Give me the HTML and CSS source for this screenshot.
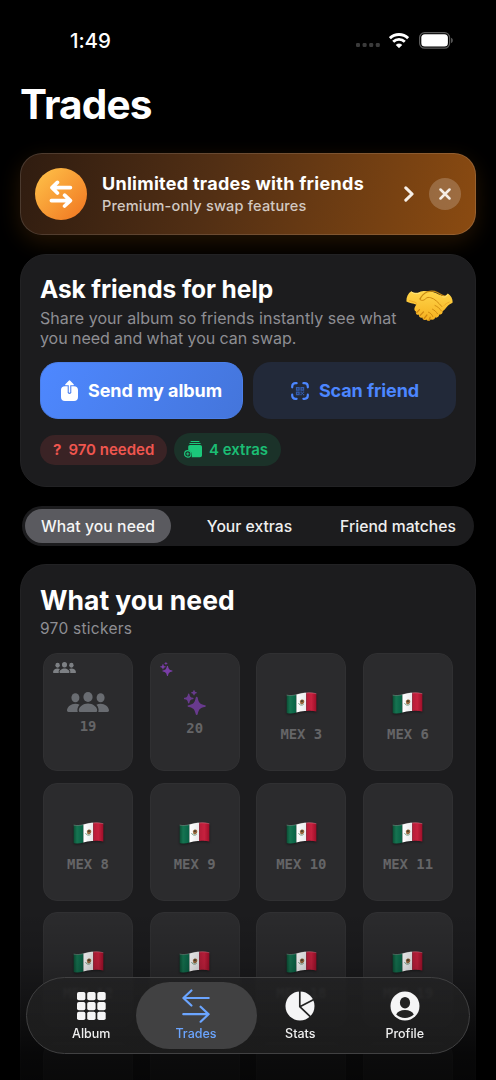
FILE: index.html
```html
<!DOCTYPE html>
<html lang="en">
<head>
<meta charset="utf-8">
<title>Trades</title>
<link rel="stylesheet" href="styles.css">
</head>
<body>
<svg class="defs" aria-hidden="true">
  <defs>
    <linearGradient id="green" x1="0" x2="1"><stop offset="0" stop-color="#0b4f35"/><stop offset=".35" stop-color="#167451"/><stop offset="1" stop-color="#076044"/></linearGradient>
    <linearGradient id="white" x1="0" x2="1"><stop offset="0" stop-color="#fff"/><stop offset="1" stop-color="#e9e9eb"/></linearGradient>
    <linearGradient id="red" x1="0" x2="1"><stop offset="0" stop-color="#b61c38"/><stop offset=".5" stop-color="#c7213e"/><stop offset="1" stop-color="#9e0e29"/></linearGradient>
    <linearGradient id="skin" x1="0" y1="0" x2="0" y2="1"><stop offset="0" stop-color="#ffd54a"/><stop offset="1" stop-color="#f6b01e"/></linearGradient>
  </defs>
  <symbol id="flag" viewBox="0 0 32 24">
    <path d="M.5 3C4 4.100 7 3.700 10.700 2.700V21.400C7 22.500 4 22.700 .5 21.800Z" fill="url(#green)"/>
    <path d="M10.700 2.700 14 1.800C17 1 19 .8 21 .8V19.800C17 19.500 14 20.500 10.700 21.400Z" fill="url(#white)"/>
    <path d="M21 .8C25 .4 28 .7 31.500 1.600V20.300C28 19.400 25 19.200 21 19.800Z" fill="url(#red)"/>
    <path d="M14.200 9.500c1-2 3.500-2.300 4.400-.8s-.1 3.800-2.100 4.300c-1.200.2-2-.6-1.800-1.500" fill="#95663b"/>
    <path d="M13 11.500c.4 2.300 3.800 3.200 5.400 1.100" fill="none" stroke="#719b82" stroke-width="1"/>
    <circle cx="16.500" cy="9.500" r="1" fill="#34352b"/>
    <path d="M.5 3.200C8 5 13 1 21 1c4-.4 7-.1 10.500.8" fill="none" stroke="#fff" stroke-opacity=".35" stroke-width=".7"/>
  </symbol>
  <symbol id="people" viewBox="0 0 42 20">
    <ellipse cx="8.400" cy="5.800" rx="4" ry="4.500"/><ellipse cx="33.600" cy="5.800" rx="4" ry="4.500"/><ellipse cx="21" cy="5" rx="4.600" ry="5"/>
    <path d="M21 11.600c-5 0-9.200 3.400-9.200 6.800 0 1.100.7 1.600 1.700 1.600h15c1 0 1.700-.5 1.700-1.600 0-3.400-4.200-6.800-9.200-6.800ZM12.600 12.800c-1.200-.7-2.700-1-4.200-1C4 11.800 0 15 0 18.600 0 19.500.6 20 1.500 20h9.200c-.8-2.500 0-5.200 1.900-7.200ZM29.400 12.800c1.200-.7 2.700-1 4.200-1 4.400 0 8.400 3.200 8.400 6.800 0 .9-.6 1.400-1.500 1.400h-9.200c.8-2.500 0-5.200-1.900-7.200Z"/>
  </symbol>
  <symbol id="sparkles" viewBox="0 0 22 25">
    <path d="M12.700 6.800c.6 0 .8.400 1 1 1 5 2.200 6.600 7.200 7.400.7.100 1 .4 1 .9s-.3.800-1 .9c-5 .9-6.200 2.400-7.200 7.100-.1.600-.4.900-1 .9s-.9-.3-1-.9c-1-4.700-2.200-6.200-7.200-7.100-.7-.1-1-.4-1-.9s.3-.8 1-.9c5-.8 6.200-2.400 7.200-7.400.1-.6.400-1 1-1Z"/>
    <path d="M4.700 3.600c.4 0 .6.300.7.700.5 2.500 1 3.100 3.500 3.500.4.100.7.300.7.700s-.3.600-.7.700c-2.500.4-3 1-3.500 3.500-.1.400-.3.700-.7.700s-.6-.3-.7-.7c-.5-2.500-1-3.100-3.500-3.500-.4-.1-.7-.3-.7-.7s.3-.6.700-.7c2.500-.4 3-1 3.500-3.500.1-.4.300-.7.700-.7ZM10 0c.3 0 .4.200.5.500.3 1.200.7 1.500 1.900 1.700.4.100.6.200.6.500s-.2.400-.6.500c-1.200.2-1.600.5-1.900 1.700-.1.300-.2.500-.5.500s-.4-.2-.5-.5c-.3-1.200-.7-1.500-1.900-1.700-.4-.1-.6-.2-.6-.5s.2-.4.600-.5c1.200-.2 1.600-.5 1.900-1.700.1-.3.200-.5.500-.5Z"/>
  </symbol>
</svg>

<header class="status">
  <span class="time">1:49</span>
  <span class="status-icons">
    <svg class="dots" viewBox="0 0 24 4"><rect width="4" height="4" rx="1.200"/><rect x="6.600" width="4" height="4" rx="1.200"/><rect x="13.200" width="4" height="4" rx="1.200"/><rect x="19.800" width="4" height="4" rx="1.200"/></svg>
    <svg class="wifi" viewBox="0 0 20 15"><g fill="none" stroke="#fff" stroke-width="2.900"><path d="M.9 5.200C6 .3 14 .3 19.100 5.200"/><path d="M4.200 8.700C7.500 5.600 12.500 5.600 15.800 8.700"/></g><path d="M10 15 6.900 11.900C8.700 10.200 11.300 10.200 13.100 11.900Z" fill="#fff" stroke="#fff" stroke-width=".3"/></svg>
    <svg class="battery" viewBox="0 0 34 17"><rect x=".6" y=".6" width="30" height="15.600" rx="5" fill="none" stroke="#5c5c5c" stroke-width="1.200"/><rect x="2.300" y="2.300" width="26.600" height="12.200" rx="3.500" fill="#fff"/><path d="M32.200 5.800c2 1 2 4.200 0 5.200Z" fill="#6a6a6a"/></svg>
  </span>
</header>

<main class="page">
  <h1 class="title">Trades</h1>

  <section class="promo">
    <span class="promo-icon"><svg viewBox="0 0 24 28" fill="none" stroke="#fff" stroke-width="3.700" stroke-linecap="round" stroke-linejoin="round"><path d="M21.400 7.600H3M8.400 2.400 3 7.600 8.400 13M2.400 20.600H21M15.600 15.200 21.400 20.600 15.600 26"/></svg></span>
    <div class="promo-text">
      <h2 class="promo-title">Unlimited trades with friends</h2>
      <p class="promo-sub">Premium-only swap features</p>
    </div>
    <svg class="chevron" viewBox="0 0 10 16" fill="none" stroke="#f6efe8" stroke-width="3" stroke-linecap="round" stroke-linejoin="round"><path d="M1.800 1.900 8.100 8 1.800 14.100"/></svg>
    <span class="close"><svg viewBox="0 0 12 12" fill="none" stroke="#f5eee7" stroke-width="2.500" stroke-linecap="round"><path d="M1.500 1.500 10.500 10.500M10.500 1.500 1.500 10.500"/></svg></span>
  </section>

  <section class="card help">
    <div class="help-head">
      <div>
        <h2 class="help-title">Ask friends for help</h2>
        <p class="help-sub"><span class="line1">Share your album so friends instantly see what</span><br><span class="line2">you need and what you can swap.</span></p>
      </div>
      <svg class="shake" viewBox="0 0 47 32">
        <path d="M.4 11.500C.2 7 2 3.200 5.300 1.200 7.500 3 10.800 3.100 13.200 2.200c2-.8 4-1.100 5.700-1.100l8 .9c4 1.200 8.700 4.200 11.600 4 1.300-.2 2.400-1.200 3.300-2.400 3.200 1.900 4.900 5.300 4.900 9-1.800 1.400-4 2.200-5.500 3.900-1.500 1.800-2.500 3.500-4.500 4.600.2 2.600-1.700 3.900-3.500 3.500-.2 2.400-2 3.500-4 2.900-.7 2.200-2.800 2.800-4.400 1.700-1 2.200-3.500 2-4.500.3-1.900 1.300-4 .1-3.900-2-2 .7-3.900-.6-3.500-2.700-2.200.3-3.700-1.500-2.900-3.400-2.700-.9-1.500-4.800.4-6.600C6.800 13.200 3.500 13.200.4 11.500Z" fill="url(#skin)"/>
        <path d="M14 9.500c1.300-3.900 4.300-6.300 8-7.900 3.200-.8 6.700-.5 9.400.9 2.400 1.200 5 3.500 7.400 3.400" fill="none" stroke="#c98a13" stroke-width="1.100"/>
        <path d="M13.700 9c.7 2 4 1.900 6-.3 1.500-1.500 3-1.500 5-1 4 1.100 7.500 4.700 11.100 8.800M29 15.500c2.700 1.200 4.800 3.100 6.400 5.400M26.500 19.200c2 1 3.700 2.500 5 4.600M22.500 22.200c2 .7 3.600 2.300 4.300 4.300" fill="none" stroke="#d08b10" stroke-width="1" stroke-linecap="round"/>
        <path d="m10.700 22.700 2.800-3M14.200 25.400l3.300-3.500M18.200 28.300l2.700-3.300M23 30.200l1.200-3" fill="none" stroke="#ce8511" stroke-width="1.200" stroke-linecap="round"/>
        <path d="M5.700 2.300c2.500 1.700 5.400 1.800 8 .8M41.700 4.800c-1.400 2.300-3.300 2.600-5 2" fill="none" stroke="#ffe77c" stroke-linecap="round"/>
        <path d="M3 10.500c3 1 6 1 7.800 3M43.600 12c-2.400.8-4.500 2.200-5.800 3.800" fill="none" stroke="#e29a17" stroke-opacity=".6"/>
      </svg>
    </div>
    <div class="actions">
      <button class="btn primary">
        <svg class="ic-send" viewBox="0 0 17 21"><path d="M4 6.200h4.500H13c2.600 0 4 1.400 4 3.900V17c0 2.600-1.400 4-4 4H4c-2.600 0-4-1.400-4-4v-6.900c0-2.500 1.400-3.900 4-3.900Z" fill="#fff"/><path d="M8.500 12.200V6" stroke="#4a7fee" stroke-width="3.600" stroke-linecap="round"/><path d="M8.500 12V2" fill="none" stroke="#fff" stroke-width="1.500" stroke-linecap="round"/><path d="M4.800 4.700 8.500 1l3.700 3.700Z" fill="#fff" stroke="#fff" stroke-width="1.300" stroke-linejoin="round"/></svg>
        <span class="send-label">Send my album</span>
      </button>
      <button class="btn secondary">
        <svg class="ic-scan" viewBox="0 0 18 18" fill="none" stroke="#4c86ff" stroke-linecap="round"><path stroke-width="2.200" d="M1.200 5.300V4.400C1.200 2.400 2.400 1.200 4.400 1.200H5.600M12.400 1.200h1.200c2 0 3.200 1.200 3.200 3.200v.9M16.800 12.700v.9c0 2-1.200 3.200-3.200 3.200h-1.200M5.600 16.800H4.400c-2 0-3.200-1.200-3.200-3.200v-.9"/><path stroke="none" fill="#335cad" d="M4.900 4.900h3.800v3.800H4.900ZM9.400 4.900h3.800v3.800H9.400ZM4.900 9.400h3.800v3.800H4.900ZM9.400 9.400h1.400v1.400H9.400ZM11.800 9.400h1.400v1.400h-1.400ZM10.700 10.700h1.300V12h-1.300ZM9.400 11.800h1.300v1.400H9.400ZM11.900 11.900h1.300v1.300h-1.300Z"/><path stroke="none" fill="#223052" d="M6.200 6.300h1.200v1.100H6.200ZM10.700 6.300h1.200v1.100h-1.200ZM6.200 10.800h1.200v1.100H6.200Z"/></svg>
        <span class="scan-label">Scan friend</span>
      </button>
    </div>
    <div class="pills">
      <span class="pill needed"><span class="q">?</span><span class="needed-label">970 needed</span></span>
      <span class="pill extras">
        <svg class="ic-stack" viewBox="0 0 18 17" fill="#1bc87a"><rect x="6.500" width="9" height="1.100" rx=".55"/><rect x="5.300" y="1.900" width="11.400" height="1.200" rx=".6"/><path d="M6.200 4H16c1.300 0 2 .7 2 2v8.300c0 1.300-.7 2-2 2H7.600c1-2.400.5-5.800-3.400-7.500V6c0-1.300.7-2 2-2Z"/><circle cx="3.800" cy="12.900" r="3.200" fill="none" stroke="#1bc87a" stroke-width="1.200"/><path d="M3.800 11.300v3.200M2.200 12.900h3.200" stroke="#1bc87a" stroke-width="1"/></svg>
        <span class="extras-label">4 extras</span>
      </span>
    </div>
  </section>

  <nav class="segments">
    <span class="segment selected">What you need</span>
    <span class="segment">Your extras</span>
    <span class="segment">Friend matches</span>
  </nav>

  <section class="card list">
    <h2 class="list-title">What you need</h2>
    <p class="list-sub">970 stickers</p>
    <div class="grid">
      <article class="sticker team"><svg class="corner"><use href="#people"/></svg><svg class="art"><use href="#people"/></svg><span>19</span></article>
      <article class="sticker shiny"><svg class="corner"><use href="#sparkles"/></svg><svg class="art"><use href="#sparkles"/></svg><span>20</span></article>
      <article class="sticker"><svg class="flag"><use href="#flag"/></svg><span>MEX 3</span></article>
      <article class="sticker"><svg class="flag"><use href="#flag"/></svg><span>MEX 6</span></article>
      <article class="sticker"><svg class="flag"><use href="#flag"/></svg><span>MEX 8</span></article>
      <article class="sticker"><svg class="flag"><use href="#flag"/></svg><span>MEX 9</span></article>
      <article class="sticker"><svg class="flag"><use href="#flag"/></svg><span>MEX 10</span></article>
      <article class="sticker"><svg class="flag"><use href="#flag"/></svg><span>MEX 11</span></article>
      <article class="sticker"><svg class="flag"><use href="#flag"/></svg><span>MEX 12</span></article>
      <article class="sticker"><svg class="flag"><use href="#flag"/></svg><span>MEX 14</span></article>
      <article class="sticker"><svg class="flag"><use href="#flag"/></svg><span>MEX 18</span></article>
      <article class="sticker"><svg class="flag"><use href="#flag"/></svg><span>MEX 19</span></article>
    </div>
    <div class="grid next-row">
      <article class="sticker"></article>
      <article class="sticker"></article>
      <article class="sticker"></article>
      <article class="sticker"></article>
    </div>
  </section>
</main>

<div class="fade"></div>
<nav class="tabs">
  <a class="tab"><svg class="tab-icon" viewBox="0 0 30 30" fill="#f5f5f6"><rect x="1" y="1" width="8.400" height="8.200" rx="1.800"/><rect x="11.200" y="1" width="8.400" height="8.200" rx="1.800"/><rect x="21.300" y="1" width="8.400" height="8.200" rx="1.800"/><rect x="1" y="11" width="8.400" height="8.200" rx="1.800"/><rect x="11.200" y="11" width="8.400" height="8.200" rx="1.800"/><rect x="21.300" y="11" width="8.400" height="8.200" rx="1.800"/><rect x="1" y="20.800" width="8.400" height="8.200" rx="1.800"/><rect x="11.200" y="20.800" width="8.400" height="8.200" rx="1.800"/><rect x="21.300" y="20.800" width="8.400" height="8.200" rx="1.800"/></svg><span>Album</span></a>
  <a class="tab active"><svg class="tab-icon swap" viewBox="0 0 28 34" fill="none" stroke="#6ba5ff" stroke-width="2.200" stroke-linecap="round" stroke-linejoin="round"><path d="M26.700 9H1.400M9.400 1.500 1.400 9l8 7.500M1.300 25.200h25.300M18.600 17.700l8 7.500-8 7.500"/></svg><span>Trades</span></a>
  <a class="tab"><svg class="tab-icon" viewBox="0 0 30 30"><circle cx="15" cy="15" r="14.500" fill="#f5f5f6"/><path d="M14.800 0V15.700L25.800 26.200M14.800 15.700 28.800 8.500" fill="none" stroke="#232323" stroke-width="1.700"/></svg><span>Stats</span></a>
  <a class="tab"><svg class="tab-icon" viewBox="0 0 30 30"><circle cx="15" cy="15" r="14.500" fill="#f5f5f6"/><ellipse cx="15" cy="11.700" rx="5.100" ry="5.800" fill="#222"/><path d="M6.200 23.500c1.300-3 4.500-4.600 8.800-4.600s7.500 1.600 8.800 4.600c-2.300 2.300-5.400 3.500-8.800 3.500s-6.500-1.200-8.800-3.500Z" fill="#222"/></svg><span>Profile</span></a>
</nav>
</body>
</html>
```
FILE: styles.css
```css
* { box-sizing: border-box; }
html { background: #000; }
body {
  margin: 0;
  width: 496px;
  height: 1080px;
  overflow: hidden;
  position: relative;
  background: #000;
  color: #fff;
  font-family: Inter, "Liberation Sans", sans-serif;
}
h1, h2, p { margin: 0; }
svg { display: block; flex: none; }
h1, h2, p, span { white-space: nowrap; }
.defs { position: absolute; width: 0; height: 0; }

.status { display: flex; justify-content: space-between; align-items: center; height: 80px; padding: 0 43px 0 70px; }
.time { font-size: 20.500px; font-weight: 550; letter-spacing: -.1px; }
.status-icons { display: flex; align-items: center; }
.dots { width: 24px; height: 4px; fill: #3b3b3b; margin: 10px 9px 0 0; }
.wifi { width: 20px; height: 15px; margin-right: 10px; }
.battery { width: 34px; height: 17px; }

.page { padding: 0 20px; }
.title { height: 73px; font-size: 40.500px; line-height: 50px; font-weight: 700; letter-spacing: -.8px; }

.promo {
  display: flex; align-items: center;
  height: 82px; padding: 0 14px;
  border: 1px solid rgba(255,255,255,.13); border-radius: 22px;
  background: linear-gradient(105deg, #2f1c10 0%, #522f14 42%, #8b4b11 100%) border-box;
  box-shadow: 0 7px 22px rgba(255,145,20,.14);
}
.promo-icon { display: grid; place-items: center; width: 52px; height: 52px; border-radius: 50%; background: linear-gradient(135deg, #ffc44a, #f07420); }
.promo-icon svg { width: 24px; height: 28px; }
.promo-text { flex: 1; margin-left: 15px; }
.promo-title { font-size: 18px; line-height: 22px; font-weight: 750; letter-spacing: .28px; padding-top: 1px; }
.promo-sub { font-size: 14.500px; line-height: 21px; font-weight: 450; letter-spacing: .19px; color: #d2c9c2; }
.chevron { width: 10px; height: 16px; margin-right: 15px; }
.close { display: grid; place-items: center; width: 32px; height: 32px; border-radius: 50%; background: rgba(255,255,255,.2); }
.close svg { width: 12px; height: 12px; }

.card { background: #1c1c1e; border: 1px solid #222224; border-radius: 26px; }
.help { height: 233px; margin-top: 19px; padding: 18px 19px; }
.help-head { display: flex; justify-content: space-between; height: 89px; }
.help-title { font-size: 24.500px; line-height: 32px; font-weight: 750; letter-spacing: -.1px; }
.help-sub { margin-top: 4px; font-size: 16px; line-height: 19.500px; color: #8e8e93; }
.line1 { letter-spacing: .06px; }
.line2 { letter-spacing: -.06px; }
.shake { width: 47px; height: 32px; margin: 17px 3px 0 0; }
.actions { display: grid; grid-template-columns: 1fr 1fr; gap: 10px; }
.btn { display: flex; align-items: center; justify-content: center; gap: 10px; height: 57px; padding: 0; border: 0; border-radius: 18px; color: #fff; font: 700 18px Inter, sans-serif; }
.primary { background: linear-gradient(120deg, #4e88ff, #4475db); border: 1px solid #4b7fe9; }
.secondary { background: #222939; color: #4c86ff; padding-left: 1px; letter-spacing: -.1px; }
.ic-send { width: 17px; height: 21px; }
.send-label { letter-spacing: -.05px; }
.ic-scan { width: 18px; height: 18px; }
.pills { display: flex; align-items: center; gap: 7px; margin-top: 14px; }
.pill { display: flex; align-items: center; border-radius: 17px; font-size: 15px; font-weight: 600; }
.needed { width: 127px; height: 30px; padding-left: 13px; gap: 7px; background: #3a2325; color: #f0564f; }
.q { font-weight: 700; }
.extras { width: 107px; height: 33px; padding-left: 10px; gap: 7px; background: #1b3229; color: #1bbd74; }
.ic-stack { width: 18px; height: 17px; }

.segments { display: grid; grid-template-columns: 149px 1fr 146px; height: 40px; margin: 19px 2px 0; padding: 3px; background: #1c1c1e; border-radius: 20px; }
.segment { display: flex; align-items: center; justify-content: center; font-size: 15.700px; font-weight: 450; color: #eee; }
.segment.selected { width: 146px; border-radius: 18px; background: #5a5a5f; color: #f5f5f5; letter-spacing: .08px; }

.list { margin-top: 18px; padding: 19px 22px 0; height: 516px; overflow: hidden; border-bottom: 0; border-radius: 26px 26px 0 0; }
.list-title { margin-left: -3px; font-size: 26.500px; line-height: 32px; font-weight: 750; letter-spacing: 0; }
.list-sub { margin-left: -3px; padding-top: 1px; font-size: 15.500px; line-height: 24px; letter-spacing: .27px; color: #8e8e93; }
.grid { display: grid; grid-template-columns: repeat(4, 90px); grid-auto-rows: 118px; justify-content: space-between; row-gap: 11.500px; margin-top: 12px; }
.next-row { grid-auto-rows: 38px; margin-top: 11.500px; }
.next-row .sticker { border-bottom: 0; border-radius: 14px 14px 0 0; padding: 0; }
.sticker { position: relative; display: flex; flex-direction: column; align-items: center; padding-top: 38px; background: #2b2b2d; border: 1px solid #303032; border-radius: 14px; color: #656567; font: 700 13.900px "DejaVu Sans Mono", monospace; }
.sticker span { line-height: 18px; margin-top: 10px; }
.flag { width: 31px; height: 23px; filter: drop-shadow(0 1px 1px rgba(0,0,0,.45)); }
.corner { position: absolute; left: 9px; top: 8px; }
.team svg { fill: #696c71; }
.team svg.corner { width: 23px; height: 11px; fill: #7d8084; }
.team .art { width: 42px; height: 20px; }
.team span { margin-top: 5px; }
.shiny { padding-top: 36px; }
.shiny svg { fill: #683a8d; }
.shiny svg.corner { width: 13px; height: 14px; fill: #793da6; }
.shiny .art { width: 22px; height: 25px; }
.shiny span { margin-top: 4px; }

.fade { position: absolute; left: 0; right: 0; top: 910px; height: 170px; background: linear-gradient(transparent, rgba(0,0,0,.12) 30%, rgba(0,0,0,.3) 50%, rgba(0,0,0,.72) 85%, rgba(0,0,0,.78)); }
.tabs {
  position: absolute; left: 26px; top: 977px;
  display: grid; grid-template-columns: repeat(4, minmax(0, 1fr));
  width: 444px; height: 77px; padding: 4px 12px;
  border: 1px solid #414142; border-radius: 39px;
  background: linear-gradient(rgba(34,34,35,.82), rgba(29,29,29,.95));
  backdrop-filter: blur(1.200px);
}
.tab { display: flex; flex-direction: column; align-items: center; padding-top: 9px; font-size: 12.500px; font-weight: 500; line-height: 16px; color: #efefef; }
.tab span { margin-top: 5px; }
.tab-icon { width: 30px; height: 30px; }
.tab.active { width: 121px; height: 67px; margin-left: -8px; padding-top: 7px; border-radius: 34px; background: rgba(67,67,68,.96); color: #6ba5ff; }
.tab-icon.swap { width: 28px; height: 34px; }
.tab.active span { margin-top: 3px; }
```
